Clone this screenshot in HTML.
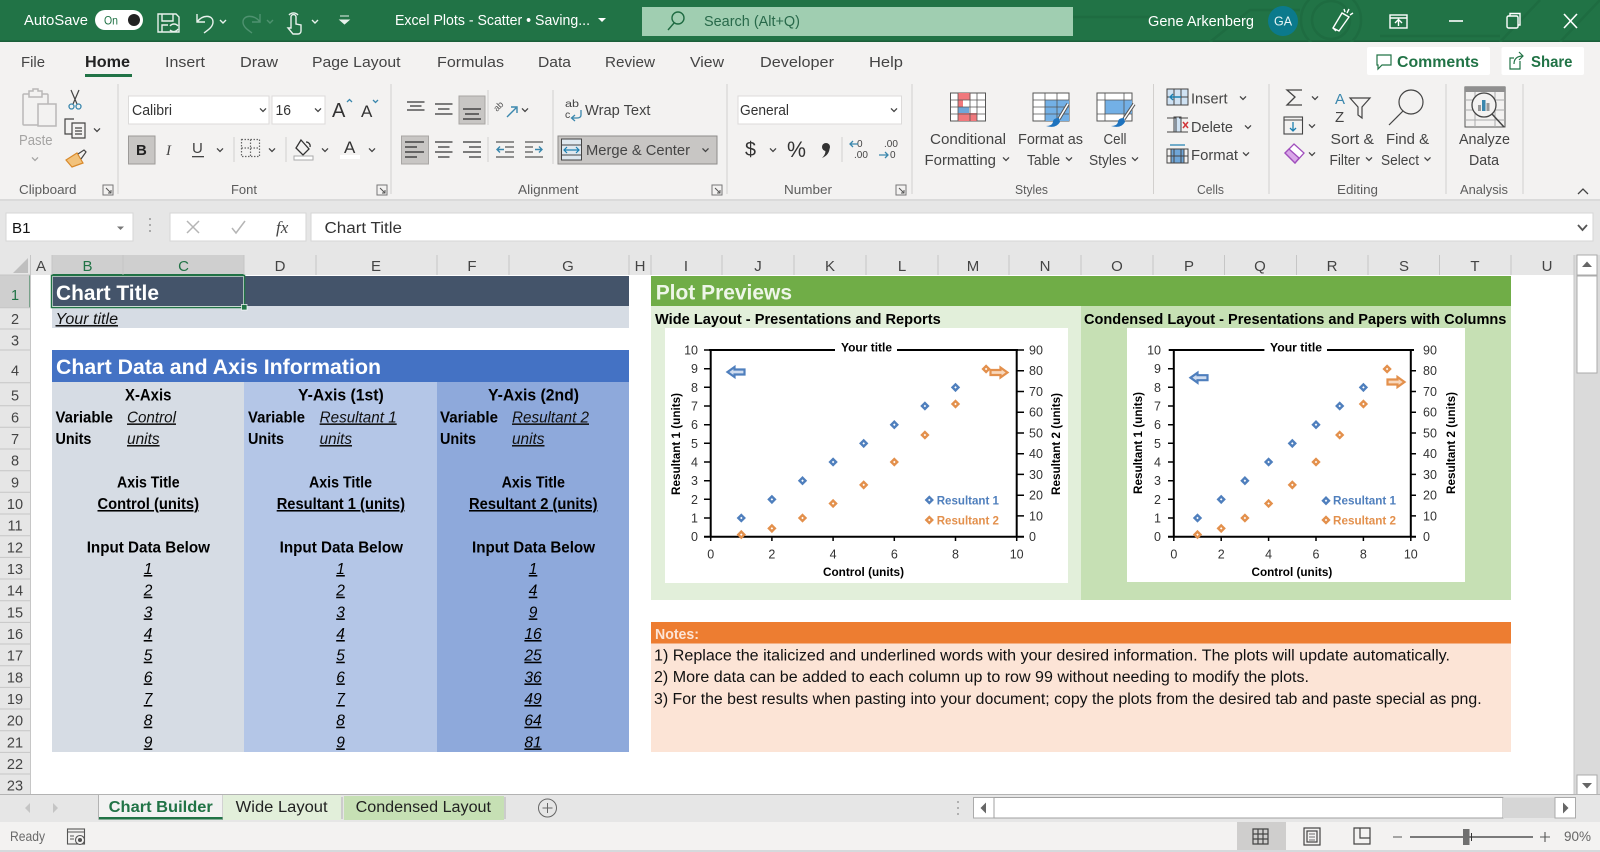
<!DOCTYPE html>
<html lang="en"><head><meta charset="utf-8"><title>Excel Plots - Scatter</title>
<style>
html,body{margin:0;padding:0;width:1600px;height:852px;overflow:hidden;background:#fff}
svg{display:block}
text{white-space:pre}
.u{text-decoration:underline}
.b{font-weight:bold}
.i{font-style:italic}
.r{fill:#444;font-size:15px}
.g{fill:#5c5c5c;font-size:13px}
.h{fill:#444;font-size:15px;text-anchor:middle}
.n{fill:#444;font-size:14.5px;text-anchor:middle}
.d{fill:#000;font-size:15.5px;font-style:italic;text-decoration:underline;text-anchor:middle}
.c{fill:#111;font-size:15.5px}
.ax{fill:#333;font-size:12.5px}
.axe{fill:#333;font-size:12.5px;text-anchor:end}
.axm{fill:#333;font-size:12.5px;text-anchor:middle}
.ctb{fill:#000;font-size:11.5px;font-weight:bold}
</style></head><body>
<svg xmlns="http://www.w3.org/2000/svg" width="1600" height="852" viewBox="0 0 1600 852" font-family="'Liberation Sans',sans-serif">
<defs>
<path id="cv" d="M-3-1.6L0 1.4L3-1.6" fill="none" stroke="#444" stroke-width="1.3"/>
<g id="ln"><rect x="-5" y="-5" width="10" height="10" fill="none" stroke="#777"/><path d="M-2-2L3 3M3 0V3H0" fill="none" stroke="#555"/></g>
<rect id="db" x="-2.100" y="-2.100" width="4.200" height="4.200" transform="rotate(45)" fill="#fff" stroke="#4f7fbd" stroke-width="2.400"/>
<rect id="do" x="-2.100" y="-2.100" width="4.200" height="4.200" transform="rotate(45)" fill="#fff" stroke="#e3904c" stroke-width="2.400"/>
<path id="la" d="M0 0L7-5V-2.500H17V2.500H7V5Z" fill="#cfdcef" stroke="#4f7fbd" stroke-width="2.200"/>
<path id="ra" d="M0 0L-7-5V-2.500H-17V2.500H-7V5Z" fill="#f8d8bd" stroke="#e3904c" stroke-width="2.200"/>
</defs>

<!-- sheet base -->
<rect width="1600" height="852" fill="#fff"/>

<!-- title bar -->
<rect width="1600" height="42" fill="#217346"/>
<rect y="40.500" width="1600" height="1.500" fill="#1b5e3a"/>
<g fill="none" stroke="#1e6c41" stroke-width="2.500">
<circle cx="1331" cy="20" r="30"/><circle cx="1331" cy="20" r="19"/>
<path d="M1073 17H1150M1210 42L1250 10H1300M1500 42L1540 0M1560 42L1600 0M1380 36H1500"/>
</g>
<text x="24" y="25" fill="#fff" font-size="15" textLength="64" lengthAdjust="spacingAndGlyphs">AutoSave</text>
<rect x="95" y="10" width="48" height="20" rx="10" fill="#fff"/>
<text x="104" y="24.500" fill="#217346" font-size="12" textLength="14" lengthAdjust="spacingAndGlyphs">On</text>
<circle cx="134" cy="20" r="6" fill="#222"/>
<g fill="none" stroke="#e8f1ec" stroke-width="1.400">
<path d="M158 14H176L179 17V32H158ZM162 14V21H173V14M162 32V25H168"/>
<path d="M170 26a5 5 0 0 1 8 0M178 29a5 5 0 0 1-8 1"/>
<path d="M197 14V22H205M197 22C203 14 213 15 213 22C213 27 208 30 204 33"/>
<path d="M220 20l3 3 3-3M312 20l3 3 3-3"/>
<path d="M291 28V17a2.400 2.400 0 0 1 5 0V24l5 1V31a3 3 0 0 1-3 3H293L288 28Z"/>
<path d="M289 15a6 6 0 0 1 9 0"/>
</g>
<g fill="none" stroke="#4f9270" stroke-width="1.400"><path d="M260 14V22H252M260 22C254 14 243 15 243 22C243 27 248 30 252 33M267 20l3 3 3-3"/></g>
<path d="M340 16H349M340 20l4.500 4 4.500-4Z" fill="#e8f1ec" stroke="#e8f1ec"/>
<text x="395" y="25" fill="#fff" font-size="15" textLength="195" lengthAdjust="spacingAndGlyphs">Excel Plots - Scatter • Saving...</text>
<path d="M598 18H606L602 22Z" fill="#fff"/>
<rect x="642" y="7" width="431" height="29" fill="#a0ceb1"/>
<g fill="none" stroke="#1f6b42" stroke-width="1.400"><circle cx="678" cy="18" r="6"/><path d="M674 23L668 30"/></g>
<text x="704" y="26" fill="#28694a" font-size="15" textLength="96" lengthAdjust="spacingAndGlyphs">Search (Alt+Q)</text>
<text x="1148" y="26" fill="#fff" font-size="15" textLength="106" lengthAdjust="spacingAndGlyphs">Gene Arkenberg</text>
<circle cx="1283" cy="21" r="15" fill="#0b7a8c"/>
<text x="1283" y="25.500" fill="#e6f4f4" font-size="12.500" text-anchor="middle">GA</text>
<g fill="none" stroke="#fff" stroke-width="1.400">
<path d="M1333 28L1342 13L1349 17L1339 31ZM1344 9L1345 12M1349 9L1347 13M1353 13L1350 15M1333 28L1336 31"/>
<rect x="1390" y="15" width="17" height="13"/><path d="M1390 18H1407M1398.500 26V20M1395 23L1398.500 19.500L1402 23"/>
<path d="M1449 21H1463" stroke-width="1.600"/>
<rect x="1507" y="16" width="11" height="12" rx="1.500"/><path d="M1510 16V13.500H1520V25H1518"/>
<path d="M1564 14L1577 28M1577 14L1564 28" stroke-width="1.600"/>
</g>

<!-- ribbon -->
<rect y="42" width="1600" height="157" fill="#f3f2f1"/>
<rect y="201" width="1600" height="54" fill="#e6e6e6"/>
<rect y="199" width="1600" height="2" fill="#dadada"/>
<text x="21" y="67" class="r" textLength="24" lengthAdjust="spacingAndGlyphs">File</text>
<text x="85" y="67" fill="#222" font-size="15.500" font-weight="bold" textLength="45" lengthAdjust="spacingAndGlyphs">Home</text>
<rect x="85" y="74" width="47" height="3" fill="#217346"/>
<text x="165" y="67" class="r" textLength="40" lengthAdjust="spacingAndGlyphs">Insert</text>
<text x="240" y="67" class="r" textLength="38" lengthAdjust="spacingAndGlyphs">Draw</text>
<text x="312" y="67" class="r" textLength="88.500" lengthAdjust="spacingAndGlyphs">Page Layout</text>
<text x="437" y="67" class="r" textLength="67" lengthAdjust="spacingAndGlyphs">Formulas</text>
<text x="538" y="67" class="r" textLength="33" lengthAdjust="spacingAndGlyphs">Data</text>
<text x="605" y="67" class="r" textLength="50" lengthAdjust="spacingAndGlyphs">Review</text>
<text x="690" y="67" class="r" textLength="34" lengthAdjust="spacingAndGlyphs">View</text>
<text x="760" y="67" class="r" textLength="74" lengthAdjust="spacingAndGlyphs">Developer</text>
<text x="869" y="67" class="r" textLength="34" lengthAdjust="spacingAndGlyphs">Help</text>
<rect x="1367" y="47" width="123" height="28" rx="2" fill="#fff"/>
<path d="M1377 55H1391V65H1382L1378 69V65H1377Z" fill="none" stroke="#217346" stroke-width="1.200"/>
<text x="1397" y="67" fill="#217346" font-size="15.500" font-weight="bold" textLength="82" lengthAdjust="spacingAndGlyphs">Comments</text>
<rect x="1501.500" y="47" width="82.500" height="28" rx="2" fill="#fff"/>
<path d="M1520 61V69H1510V58H1514M1514 64C1514 59 1517 56 1523 56M1519 52L1523 56L1519 60" fill="none" stroke="#217346" stroke-width="1.200"/>
<text x="1531" y="67" fill="#217346" font-size="15.500" font-weight="bold" textLength="41.500" lengthAdjust="spacingAndGlyphs">Share</text>

<!-- separators -->
<g stroke="#d2d0ce" stroke-width="1">
<path d="M118 84V194M391 84V194M727 84V194M912 84V194M1153.500 84V194M1269 84V194M1446 84V194M1523 84V194"/>
<path d="M234 137V162M286 137V162M488 90V125M488 137V162M553 90V164M842 137V162"/>
</g>
<!-- group labels -->
<text x="19" y="194" class="g" textLength="57.500" lengthAdjust="spacingAndGlyphs">Clipboard</text>
<text x="231" y="194" class="g" textLength="26" lengthAdjust="spacingAndGlyphs">Font</text>
<text x="518" y="194" class="g" textLength="60.500" lengthAdjust="spacingAndGlyphs">Alignment</text>
<text x="784" y="194" class="g" textLength="48" lengthAdjust="spacingAndGlyphs">Number</text>
<text x="1015" y="194" class="g" textLength="33" lengthAdjust="spacingAndGlyphs">Styles</text>
<text x="1197" y="194" class="g" textLength="27" lengthAdjust="spacingAndGlyphs">Cells</text>
<text x="1337" y="194" class="g" textLength="41" lengthAdjust="spacingAndGlyphs">Editing</text>
<text x="1460" y="194" class="g" textLength="48" lengthAdjust="spacingAndGlyphs">Analysis</text>
<use href="#ln" x="108" y="190"/><use href="#ln" x="382" y="190"/><use href="#ln" x="717" y="190"/><use href="#ln" x="901" y="190"/>
<path d="M1578 194L1583 189L1588 194" fill="none" stroke="#444" stroke-width="1.300"/>

<!-- clipboard -->
<g fill="#f3f2f1" stroke="#b9b8b7" stroke-width="1.500">
<rect x="23" y="94" width="25" height="31" rx="1"/><path d="M29 94V91H33V89H38V91H42V94V97H29Z"/>
<rect x="38" y="104" width="18" height="22" fill="#f3f2f1"/>
</g>
<text x="19" y="145" fill="#a5a4a3" font-size="14.500" textLength="33.500" lengthAdjust="spacingAndGlyphs">Paste</text>
<use href="#cv" x="35" y="159" opacity=".45"/>
<g fill="none" stroke="#444" stroke-width="1.200"><path d="M71 90L77 104M79 90L73 104"/></g>
<g fill="none" stroke="#3a87ad" stroke-width="1.300"><circle cx="71.500" cy="106.500" r="2.500"/><circle cx="78.500" cy="106.500" r="2.500"/></g>
<path d="M72 134H65V119H74M77 123H85V138H72V123H77M75 128H82M75 131H82M75 134H82" fill="none" stroke="#444" stroke-width="1.200"/>
<use href="#cv" x="97" y="130"/>
<path d="M66 160L77 153L83 163L72 167Z" fill="#f2c27b" stroke="#d98a2b" stroke-width="1.200"/><path d="M78 154L84 150L86 152L81 159" fill="none" stroke="#444" stroke-width="1.200"/>

<!-- font -->
<rect x="128.500" y="96" width="140.500" height="28" fill="#fff" stroke="#dcdbda"/>
<text x="132" y="115" fill="#333" font-size="15" textLength="40" lengthAdjust="spacingAndGlyphs">Calibri</text>
<use href="#cv" x="263" y="110"/>
<rect x="272" y="96" width="53" height="28" fill="#fff" stroke="#dcdbda"/>
<text x="275.500" y="115" fill="#333" font-size="15" textLength="15.500" lengthAdjust="spacingAndGlyphs">16</text>
<use href="#cv" x="318" y="110"/>
<text x="332" y="117" fill="#333" font-size="20">A</text>
<path d="M347 102L349.500 99.500L352 102" fill="none" stroke="#3a87ad" stroke-width="1.300"/>
<text x="361" y="117" fill="#333" font-size="17">A</text>
<path d="M373 100L375.500 102.500L378 100" fill="none" stroke="#3a87ad" stroke-width="1.300"/>
<rect x="128.500" y="136" width="26.500" height="28" fill="#c8c6c4" stroke="#9c9a98"/>
<text x="136" y="155" fill="#222" font-size="15" font-weight="bold">B</text>
<text x="166" y="155" fill="#444" font-size="15" font-style="italic" font-family="'Liberation Serif',serif">I</text>
<text x="192" y="153" fill="#444" font-size="15">U</text><rect x="192" y="156" width="12" height="1.300" fill="#444"/>
<use href="#cv" x="220" y="150"/>
<g fill="none" stroke="#666" stroke-width="1.200" stroke-dasharray="1.500 1.500"><rect x="241.500" y="139.500" width="18" height="17"/><path d="M250.500 139.500V156.500M241.500 148H259.500"/></g>
<use href="#cv" x="272" y="150"/>
<path d="M301 140L309 149L303 155L296 148ZM306 142a4 4 0 0 1 4 5" fill="none" stroke="#333" stroke-width="1.300"/>
<rect x="294" y="156" width="19" height="4" fill="#fff" stroke="#aaa"/>
<use href="#cv" x="325" y="150"/>
<text x="344" y="153" fill="#333" font-size="17">A</text><rect x="340" y="155" width="20" height="4" fill="#fff"/>
<use href="#cv" x="372" y="150"/>

<!-- alignment -->
<g stroke="#555" stroke-width="1.400">
<path d="M407 102H424.500M410 106H421.500M407 110H424.500"/>
<path d="M435 104H452.500M438 109H449.500M435 114H452.500"/>
</g>
<rect x="459" y="96" width="26" height="28" fill="#c8c6c4" stroke="#a8a6a4"/>
<g stroke="#444" stroke-width="1.400"><path d="M463 109H481M465 114H479M463 119H481"/></g>
<text x="497" y="112" fill="#555" font-size="9" transform="rotate(-45 497 112)">ab</text>
<path d="M507 117L516 108M511 107H517V113" fill="none" stroke="#3a87ad" stroke-width="1.400"/>
<use href="#cv" x="525" y="110"/>
<text x="565" y="107" fill="#444" font-size="10.500" textLength="14" lengthAdjust="spacingAndGlyphs">ab</text>
<text x="565" y="118" fill="#444" font-size="10.500">c</text>
<path d="M581 110V115Q581 118 577 118H572M575 115L571.500 118L575 121" fill="none" stroke="#3a87ad" stroke-width="1.300"/>
<text x="585" y="115" class="r" textLength="65.500" lengthAdjust="spacingAndGlyphs">Wrap Text</text>
<rect x="401.500" y="136" width="27" height="28" fill="#c8c6c4" stroke="#a8a6a4"/>
<g stroke="#444" stroke-width="1.400"><path d="M405 142H424M405 147H417M405 152H424M405 157H417"/></g>
<g stroke="#555" stroke-width="1.400"><path d="M435 142H452.500M438 147H449.500M435 152H452.500M438 157H449.500M463 142H481M469 147H481M463 152H481M469 157H481"/></g>
<g stroke="#555" stroke-width="1.300" fill="none"><path d="M505 147H514M505 152H514M496 157H514M496 142H514" /></g>
<path d="M504 149.500H497M500 146.500L497 149.500L500 152.500" fill="none" stroke="#3a87ad" stroke-width="1.400"/>
<g stroke="#555" stroke-width="1.300" fill="none"><path d="M525 142H543M525 147H533M525 152H533M525 157H543"/></g>
<path d="M535 149.500H542M539 146.500L542 149.500L539 152.500" fill="none" stroke="#3a87ad" stroke-width="1.400"/>
<rect x="558" y="136" width="159" height="28" fill="#c8c6c4" stroke="#8e8c8a"/>
<rect x="561.500" y="139" width="20" height="21" fill="#dfe8ef" stroke="#444"/>
<path d="M561.500 145H581.500M561.500 155H581.500" stroke="#444" fill="none"/>
<path d="M564 150H579M567 147L564 150L567 153M576 147L579 150L576 153" fill="none" stroke="#1b7fb0" stroke-width="1.200"/>
<text x="586" y="155" fill="#444" font-size="15" textLength="104" lengthAdjust="spacingAndGlyphs">Merge &amp; Center</text>
<use href="#cv" x="705.500" y="150"/>

<!-- number -->
<rect x="738" y="96" width="163.500" height="28" fill="#fff" stroke="#dcdbda"/>
<text x="740" y="115" fill="#333" font-size="15" textLength="49" lengthAdjust="spacingAndGlyphs">General</text>
<use href="#cv" x="894" y="110"/>
<text x="745" y="156" fill="#333" font-size="20" textLength="11" lengthAdjust="spacingAndGlyphs">$</text>
<use href="#cv" x="773" y="150"/>
<text x="787" y="157" fill="#333" font-size="22" textLength="19" lengthAdjust="spacingAndGlyphs">%</text>
<circle cx="826" cy="147" r="4" fill="#333"/><path d="M829.500 147C830 152 827 156 822 158C825 155 826 152 825 150Z" fill="#333"/>
<text x="857" y="147" fill="#444" font-size="10">0</text>
<text x="854" y="158" fill="#444" font-size="10">.00</text>
<path d="M858 144H850M853 141L850 144L853 147" fill="none" stroke="#3a87ad" stroke-width="1.300"/>
<text x="884" y="147" fill="#444" font-size="10">.00</text>
<text x="890" y="158" fill="#444" font-size="10">0</text>
<path d="M879 155H888M885 152L888 155L885 158" fill="none" stroke="#3a87ad" stroke-width="1.300"/>

<!-- styles -->
<g>
<rect x="950.500" y="93" width="35" height="28" fill="#fff" stroke="#555"/>
<rect x="958" y="93" width="12.500" height="7" fill="#f0787c"/><rect x="958" y="100" width="5" height="7" fill="#f0787c"/>
<rect x="958" y="107" width="11" height="6" fill="#6fa6d8"/>
<rect x="958" y="113" width="19" height="8" fill="#f0787c"/>
<path d="M958 93V121M970 93V121M977 93V121M950.500 100H985.500M950.500 107H985.500M950.500 114H985.500" stroke="#555" fill="none" stroke-width=".8"/>
</g>
<g>
<rect x="1033" y="93" width="36" height="28" fill="#fff" stroke="#555"/>
<rect x="1045" y="100" width="24" height="21" fill="#73b0e6"/>
<path d="M1045 93V121M1057 93V121M1033 100H1069M1033 107H1069M1033 114H1069" stroke="#555" fill="none" stroke-width=".8"/>
<path d="M1068 104L1059 119" stroke="#555" stroke-width="3.500"/><path d="M1068 104L1059 119" stroke="#fff" stroke-width="1.500"/>
<path d="M1059 118Q1053 118 1053 122Q1052 126 1046 126Q1056 129 1060 122Z" fill="#1e73be"/>
</g>
<g>
<rect x="1097" y="93" width="35" height="28" fill="#fff" stroke="#555"/>
<rect x="1105" y="100" width="27" height="14" fill="#73b0e6"/>
<path d="M1105 93V121M1124 93V121M1097 100H1132M1097 114H1132" stroke="#555" fill="none" stroke-width=".8"/>
<path d="M1134 104L1124 119" stroke="#555" stroke-width="3.500"/><path d="M1134 104L1124 119" stroke="#fff" stroke-width="1.500"/>
<path d="M1124 118Q1118 118 1118 122Q1117 126 1111 126Q1121 129 1125 122Z" fill="#1e73be"/>
</g>
<g class="st" fill="#444" font-size="15">
<text x="930" y="144" textLength="76" lengthAdjust="spacingAndGlyphs">Conditional</text>
<text x="924.500" y="165" textLength="71.500" lengthAdjust="spacingAndGlyphs">Formatting</text>
<text x="1018" y="144" textLength="65" lengthAdjust="spacingAndGlyphs">Format as</text>
<text x="1027" y="165" textLength="33" lengthAdjust="spacingAndGlyphs">Table</text>
<text x="1103.500" y="144" textLength="23" lengthAdjust="spacingAndGlyphs">Cell</text>
<text x="1089" y="165" textLength="37.500" lengthAdjust="spacingAndGlyphs">Styles</text>
<text x="1191" y="103.500" textLength="36.500" lengthAdjust="spacingAndGlyphs">Insert</text>
<text x="1191" y="132" textLength="42" lengthAdjust="spacingAndGlyphs">Delete</text>
<text x="1191" y="160" textLength="47" lengthAdjust="spacingAndGlyphs">Format</text>
<text x="1330.500" y="144" textLength="43.500" lengthAdjust="spacingAndGlyphs">Sort &amp;</text>
<text x="1329.500" y="165" textLength="30.500" lengthAdjust="spacingAndGlyphs">Filter</text>
<text x="1386" y="144" textLength="43" lengthAdjust="spacingAndGlyphs">Find &amp;</text>
<text x="1381" y="165" textLength="38" lengthAdjust="spacingAndGlyphs">Select</text>
<text x="1459" y="144" textLength="51" lengthAdjust="spacingAndGlyphs">Analyze</text>
<text x="1469" y="165" textLength="30" lengthAdjust="spacingAndGlyphs">Data</text>
</g>
<use href="#cv" x="1006" y="159"/><use href="#cv" x="1069" y="159"/><use href="#cv" x="1135" y="159"/>
<use href="#cv" x="1243" y="98"/><use href="#cv" x="1248" y="127"/><use href="#cv" x="1246" y="154"/>
<use href="#cv" x="1369" y="159"/><use href="#cv" x="1427.500" y="159"/>

<!-- cells -->
<g fill="none" stroke="#444" stroke-width="1">
<rect x="1167" y="89" width="21" height="16" fill="#cfe2f3"/><path d="M1174 89V105M1181 89V105M1167 97H1188"/>
<rect x="1174" y="117" width="7" height="15" fill="#cfe2f3"/><path d="M1167 118H1176V132H1167M1188 118H1179M1188 132H1179"/>
<rect x="1167" y="149" width="21" height="14"/><rect x="1171" y="149" width="13" height="14" fill="#6fa6d8"/><path d="M1174 149V163M1181 149V163M1167 156H1188"/>
</g>
<path d="M1181 97H1170M1173 94L1170 97L1173 100" fill="none" stroke="#1b7fb0" stroke-width="1.400"/>
<path d="M1183 122L1188 128M1188 122L1183 128" stroke="#d13438" stroke-width="1.500"/>
<path d="M1170 145H1185" stroke="#1b7fb0" stroke-width="1.200"/>

<!-- editing -->
<path d="M1302 90H1287L1295 97L1287 105H1302" fill="none" stroke="#444" stroke-width="1.300"/>
<use href="#cv" x="1315" y="98"/>
<rect x="1284" y="117" width="18.500" height="17" fill="none" stroke="#444" stroke-width="1.100"/><path d="M1284 120H1302.500" stroke="#444"/>
<path d="M1293 122V131M1290 128L1293 131L1296 128" fill="none" stroke="#1b7fb0" stroke-width="1.300"/>
<use href="#cv" x="1312" y="126"/>
<path d="M1294 144L1304 153L1295 163L1285 153Z" fill="#fff" stroke="#a04fbd" stroke-width="1.300"/><path d="M1289 149L1299 158L1295 163L1285 153Z" fill="#d9a8e8" stroke="#a04fbd" stroke-width="1.300"/>
<use href="#cv" x="1312" y="154"/>
<text x="1335" y="104" fill="#3a87ad" font-size="15">A</text>
<text x="1335" y="122" fill="#444" font-size="15">Z</text>
<path d="M1350 98H1370L1362 107V118L1358 115V107Z" fill="none" stroke="#444" stroke-width="1.200"/>
<circle cx="1411" cy="102" r="12" fill="none" stroke="#444" stroke-width="1.200"/><path d="M1403 111L1389 125" stroke="#444" stroke-width="1.200"/>

<!-- analyze -->
<rect x="1465" y="87" width="40" height="40" fill="#f3f2f1" stroke="#555"/>
<rect x="1465" y="87" width="40" height="5" fill="#8f8f8f"/>
<path d="M1465 100H1505M1465 110H1505M1465 120H1505M1475 92V127M1495 92V127" stroke="#aaa" fill="none"/>
<circle cx="1484" cy="105" r="12" fill="#f3f2f1" stroke="#444" stroke-width="1.300"/>
<rect x="1478" y="105" width="3" height="6" fill="#999"/><rect x="1482" y="100" width="3.500" height="11" fill="#3a87ad"/><rect x="1486.500" y="103" width="3" height="8" fill="#999"/>
<path d="M1492 114L1504 127" stroke="#444" stroke-width="1.500"/>

<!-- formula bar -->
<rect x="6" y="213" width="127" height="28" fill="#fff" stroke="#d6d6d6"/>
<text x="12" y="233" fill="#111" font-size="15" textLength="18.500" lengthAdjust="spacingAndGlyphs">B1</text>
<path d="M117 226.500H124L120.500 230Z" fill="#777"/>
<path d="M150 218v2M150 224v2M150 230v2" stroke="#aaa" stroke-width="2"/>
<rect x="170" y="213" width="136" height="28" fill="#fff" stroke="#d6d6d6"/>
<path d="M187 221L199 233M199 221L187 233" stroke="#b5b5b5" stroke-width="1.500"/>
<path d="M232 228L236 233L245 221" fill="none" stroke="#b5b5b5" stroke-width="1.500"/>
<text x="276" y="233" fill="#444" font-size="17" font-style="italic" font-family="'Liberation Serif',serif">fx</text>
<rect x="311" y="213" width="1282" height="28" fill="#fff" stroke="#d6d6d6"/>
<text x="324.500" y="233" fill="#333" font-size="15.500" textLength="77.500" lengthAdjust="spacingAndGlyphs">Chart Title</text>
<path d="M1578 225L1582.500 230L1587 225" fill="none" stroke="#555" stroke-width="1.800"/>

<!-- column headers -->
<rect y="255" width="1574" height="20" fill="#e6e6e6"/>
<rect x="52" y="255" width="192" height="20" fill="#cfcfcf"/>
<rect x="52" y="274" width="192" height="1.500" fill="#217346"/>
<path d="M28 258V273H13Z" fill="#bfbfbf"/>
<g stroke="#c6c6c6" stroke-width="1">
<path d="M30.500 255V275M52 255V275M123 255V275M244 255V275M316 255V275M437 255V275M509 255V275M629 255V275M651 255V275M722 255V275M794 255V275M866 255V275M938 255V275M1009 255V275M1081 255V275M1153 255V275M1224.500 255V275M1296.500 255V275M1368 255V275M1439.500 255V275M1511 255V275M1574 255V800"/>
</g>
<text x="41" y="271" class="h">A</text><text x="87.500" y="271" class="h" style="fill:#217346">B</text><text x="183.500" y="271" class="h" style="fill:#217346">C</text>
<text x="280" y="271" class="h">D</text><text x="376" y="271" class="h">E</text><text x="472" y="271" class="h">F</text><text x="568" y="271" class="h">G</text><text x="640" y="271" class="h">H</text>
<text x="686" y="271" class="h">I</text><text x="758" y="271" class="h">J</text><text x="830" y="271" class="h">K</text><text x="902" y="271" class="h">L</text><text x="973" y="271" class="h">M</text><text x="1045" y="271" class="h">N</text><text x="1117" y="271" class="h">O</text><text x="1189" y="271" class="h">P</text><text x="1260" y="271" class="h">Q</text><text x="1332" y="271" class="h">R</text><text x="1404" y="271" class="h">S</text><text x="1475" y="271" class="h">T</text><text x="1547" y="271" class="h">U</text>

<!-- row headers -->
<rect x="0" y="275" width="30.500" height="520" fill="#e6e6e6"/>
<rect x="0" y="275" width="30.500" height="33" fill="#cfcfcf"/>
<rect x="29.500" y="275" width="1.500" height="33" fill="#217346"/>
<path d="M0 275H30.500M0 307.700H30.500M0 329H30.500M0 350H30.500M0 382.700H30.500M0 405.700H30.500M0 427.300H30.500M0 449H30.500M0 470.700H30.500M0 492.300H30.500M0 514H30.500M0 535.700H30.500M0 557.400H30.500M0 579H30.500M0 600.700H30.500M0 622.400H30.500M0 644H30.500M0 665.700H30.500M0 687.400H30.500M0 709H30.500M0 730.700H30.500M0 752.400H30.500M0 774H30.500" stroke="#c6c6c6"/>
<path d="M30.500 275V795" stroke="#c6c6c6"/>
<text x="15" y="300" class="n" style="fill:#217346">1</text><text x="15" y="324" class="n">2</text><text x="15" y="345.700" class="n">3</text><text x="15" y="375.500" class="n">4</text><text x="15" y="400.700" class="n">5</text><text x="15" y="422.400" class="n">6</text><text x="15" y="444" class="n">7</text><text x="15" y="465.700" class="n">8</text><text x="15" y="487.400" class="n">9</text><text x="15" y="509" class="n">10</text><text x="15" y="530.700" class="n">11</text><text x="15" y="552.400" class="n">12</text><text x="15" y="574" class="n">13</text><text x="15" y="595.700" class="n">14</text><text x="15" y="617.400" class="n">15</text><text x="15" y="639" class="n">16</text><text x="15" y="660.700" class="n">17</text><text x="15" y="682.400" class="n">18</text><text x="15" y="704" class="n">19</text><text x="15" y="725.700" class="n">20</text><text x="15" y="747.400" class="n">21</text><text x="15" y="769" class="n">22</text><text x="15" y="790.700" class="n">23</text>

<!-- left data -->
<rect x="52" y="276" width="577" height="30" fill="#44546a"/>
<rect x="52" y="306" width="577" height="22" fill="#d6dce4"/>
<rect x="52" y="350" width="577" height="32" fill="#4472c4"/>
<rect x="52" y="382" width="192" height="370" fill="#d6dce4"/>
<rect x="244" y="382" width="193" height="370" fill="#b4c6e7"/>
<rect x="437" y="382" width="192" height="370" fill="#8ea9db"/>
<rect x="51.500" y="275.500" width="193" height="32" fill="none" stroke="#217346" stroke-width="1.500"/>
<rect x="52.500" y="276.500" width="191" height="30" fill="none" stroke="#d8e6dc" stroke-width=".7"/>
<rect x="241.500" y="304.500" width="5.500" height="5.500" fill="#217346" stroke="#fff" stroke-width=".7"/>
<text x="56" y="300" fill="#fff" font-size="21" font-weight="bold" textLength="103" lengthAdjust="spacingAndGlyphs">Chart Title</text>
<text x="55.500" y="324" class="c i u" textLength="62.500" lengthAdjust="spacingAndGlyphs">Your title</text>
<text x="56" y="374" fill="#fff" font-size="21" font-weight="bold" textLength="325" lengthAdjust="spacingAndGlyphs">Chart Data and Axis Information</text>

<g fill="#000" font-size="16.500" font-weight="bold">
<text x="125" y="400.700" textLength="46.400" lengthAdjust="spacingAndGlyphs">X-Axis</text>
<text x="298" y="400.700" textLength="85.700" lengthAdjust="spacingAndGlyphs">Y-Axis (1st)</text>
<text x="488" y="400.700" textLength="91" lengthAdjust="spacingAndGlyphs">Y-Axis (2nd)</text>
</g>
<g fill="#000" font-size="15.500" font-weight="bold">
<text x="55.500" y="422.400" textLength="57.500" lengthAdjust="spacingAndGlyphs">Variable</text>
<text x="248" y="422.400" textLength="57" lengthAdjust="spacingAndGlyphs">Variable</text>
<text x="440" y="422.400" textLength="58" lengthAdjust="spacingAndGlyphs">Variable</text>
<text x="55.500" y="444" textLength="35.900" lengthAdjust="spacingAndGlyphs">Units</text>
<text x="248" y="444" textLength="36" lengthAdjust="spacingAndGlyphs">Units</text>
<text x="440" y="444" textLength="36" lengthAdjust="spacingAndGlyphs">Units</text>
<text x="117" y="487.400" textLength="62.600" lengthAdjust="spacingAndGlyphs">Axis Title</text>
<text x="309" y="487.400" textLength="63" lengthAdjust="spacingAndGlyphs">Axis Title</text>
<text x="501.600" y="487.400" textLength="63.400" lengthAdjust="spacingAndGlyphs">Axis Title</text>
<text x="97.500" y="509" class="u" textLength="101.500" lengthAdjust="spacingAndGlyphs">Control (units)</text>
<text x="276.700" y="509" class="u" textLength="128.300" lengthAdjust="spacingAndGlyphs">Resultant 1 (units)</text>
<text x="469" y="509" class="u" textLength="128.500" lengthAdjust="spacingAndGlyphs">Resultant 2 (units)</text>
<text x="86.700" y="552.400" textLength="123.300" lengthAdjust="spacingAndGlyphs">Input Data Below</text>
<text x="279.600" y="552.400" textLength="123.400" lengthAdjust="spacingAndGlyphs">Input Data Below</text>
<text x="472" y="552.400" textLength="123" lengthAdjust="spacingAndGlyphs">Input Data Below</text>
</g>
<text x="127" y="422.400" class="c i u" textLength="49" lengthAdjust="spacingAndGlyphs">Control</text>
<text x="319.600" y="422.400" class="c i u" textLength="77.100" lengthAdjust="spacingAndGlyphs">Resultant 1</text>
<text x="512" y="422.400" class="c i u" textLength="77" lengthAdjust="spacingAndGlyphs">Resultant 2</text>
<text x="127" y="444" class="c i u" textLength="32.600" lengthAdjust="spacingAndGlyphs">units</text>
<text x="319.600" y="444" class="c i u" textLength="32.400" lengthAdjust="spacingAndGlyphs">units</text>
<text x="512" y="444" class="c i u" textLength="32.500" lengthAdjust="spacingAndGlyphs">units</text>

<text x="148" y="574" class="d">1</text><text x="148" y="595.700" class="d">2</text><text x="148" y="617.400" class="d">3</text><text x="148" y="639" class="d">4</text><text x="148" y="660.700" class="d">5</text><text x="148" y="682.400" class="d">6</text><text x="148" y="704" class="d">7</text><text x="148" y="725.700" class="d">8</text><text x="148" y="747.400" class="d">9</text>
<text x="340.500" y="574" class="d">1</text><text x="340.500" y="595.700" class="d">2</text><text x="340.500" y="617.400" class="d">3</text><text x="340.500" y="639" class="d">4</text><text x="340.500" y="660.700" class="d">5</text><text x="340.500" y="682.400" class="d">6</text><text x="340.500" y="704" class="d">7</text><text x="340.500" y="725.700" class="d">8</text><text x="340.500" y="747.400" class="d">9</text>
<text x="533" y="574" class="d">1</text><text x="533" y="595.700" class="d">4</text><text x="533" y="617.400" class="d">9</text><text x="533" y="639" class="d">16</text><text x="533" y="660.700" class="d">25</text><text x="533" y="682.400" class="d">36</text><text x="533" y="704" class="d">49</text><text x="533" y="725.700" class="d">64</text><text x="533" y="747.400" class="d">81</text>

<!-- right panels -->
<rect x="651" y="276" width="860" height="30" fill="#70ad47"/>
<rect x="651" y="306" width="430" height="294" fill="#e2efda"/>
<rect x="1081" y="306" width="430" height="294" fill="#c6e0b4"/>
<text x="655.700" y="299.300" fill="#eef6e8" font-size="21" font-weight="bold" textLength="136.300" lengthAdjust="spacingAndGlyphs">Plot Previews</text>
<text x="655" y="324" fill="#000" font-size="15" font-weight="bold" textLength="285.700" lengthAdjust="spacingAndGlyphs">Wide Layout - Presentations and Reports</text>
<text x="1084" y="324" fill="#000" font-size="15" font-weight="bold" textLength="422.400" lengthAdjust="spacingAndGlyphs">Condensed Layout - Presentations and Papers with Columns</text>

<!-- chart 1 -->
<rect x="665" y="328" width="403" height="255" fill="#fff"/>
<g stroke="#000" fill="none">
<path d="M709 350H835M897 350H1018M710.700 350V537M1016.700 350V537M704 536.700H1024" stroke-width="2"/>
<path d="M704 350H710M704 368.700H710M704 387.300H710M704 406H710M704 424.700H710M704 443.300H710M704 462H710M704 480.700H710M704 499.300H710M704 518H710M1017 370.700H1024M1017 391.500H1024M1017 412.200H1024M1017 433H1024M1017 453.700H1024M1017 474.400H1024M1017 495.200H1024M1017 515.900H1024M1017 350H1024M710.700 536V541M771.900 536V541M833.100 536V541M894.300 536V541M955.500 536V541M1016.700 536V541" stroke-width="1.500"/>
</g>
<text x="841" y="351.500" class="ctb" textLength="51" lengthAdjust="spacingAndGlyphs">Your title</text>
<text x="698" y="354.500" class="axe">10</text><text x="698" y="373.200" class="axe">9</text><text x="698" y="391.800" class="axe">8</text><text x="698" y="410.500" class="axe">7</text><text x="698" y="429.200" class="axe">6</text><text x="698" y="447.800" class="axe">5</text><text x="698" y="466.500" class="axe">4</text><text x="698" y="485.200" class="axe">3</text><text x="698" y="503.800" class="axe">2</text><text x="698" y="522.500" class="axe">1</text><text x="698" y="541.200" class="axe">0</text>
<text x="1029" y="354.500" class="ax">90</text><text x="1029" y="375.200" class="ax">80</text><text x="1029" y="396" class="ax">70</text><text x="1029" y="416.700" class="ax">60</text><text x="1029" y="437.500" class="ax">50</text><text x="1029" y="458.200" class="ax">40</text><text x="1029" y="478.900" class="ax">30</text><text x="1029" y="499.700" class="ax">20</text><text x="1029" y="520.400" class="ax">10</text><text x="1029" y="541.200" class="ax">0</text>
<text x="710.700" y="558.300" class="axm">0</text><text x="771.900" y="558.300" class="axm">2</text><text x="833.100" y="558.300" class="axm">4</text><text x="894.300" y="558.300" class="axm">6</text><text x="955.500" y="558.300" class="axm">8</text><text x="1016.700" y="558.300" class="axm">10</text>
<text x="823" y="576" class="ctb" textLength="81" lengthAdjust="spacingAndGlyphs">Control (units)</text>
<text transform="translate(680 495) rotate(-90)" class="ctb" textLength="102" lengthAdjust="spacingAndGlyphs">Resultant 1 (units)</text>
<text transform="translate(1060 495) rotate(-90)" class="ctb" textLength="102" lengthAdjust="spacingAndGlyphs">Resultant 2 (units)</text>
<use href="#db" x="741.300" y="518"/><use href="#db" x="771.900" y="499.400"/><use href="#db" x="802.500" y="480.700"/><use href="#db" x="833.100" y="462"/><use href="#db" x="863.700" y="443.400"/><use href="#db" x="894.300" y="424.700"/><use href="#db" x="924.900" y="406"/><use href="#db" x="955.500" y="387.400"/>
<use href="#do" x="741.300" y="534.600"/><use href="#do" x="771.900" y="528.400"/><use href="#do" x="802.500" y="518"/><use href="#do" x="833.100" y="503.500"/><use href="#do" x="863.700" y="484.900"/><use href="#do" x="894.300" y="462"/><use href="#do" x="924.900" y="435"/><use href="#do" x="955.500" y="404"/><use href="#do" x="986.100" y="369"/>
<use href="#la" x="727.500" y="372"/><use href="#ra" x="1007.500" y="372.500"/>
<use href="#db" x="929.300" y="500"/><use href="#do" x="929.300" y="520"/>
<text x="936.700" y="504.300" fill="#4f7fbd" font-size="12" font-weight="bold" textLength="62.300" lengthAdjust="spacingAndGlyphs">Resultant 1</text>
<text x="936.700" y="524.300" fill="#e3904c" font-size="12" font-weight="bold" textLength="62.300" lengthAdjust="spacingAndGlyphs">Resultant 2</text>

<!-- chart 2 -->
<rect x="1127" y="328" width="338" height="254" fill="#fff"/>
<g stroke="#000" fill="none">
<path d="M1168.700 350H1264.400M1327 350H1414M1173.800 350V537M1410.800 350V537M1168 536.700H1416" stroke-width="2"/>
<path d="M1168 368.700H1174M1168 387.300H1174M1168 406H1174M1168 424.700H1174M1168 443.300H1174M1168 462H1174M1168 480.700H1174M1168 499.300H1174M1168 518H1174M1411 370.700H1416M1411 391.500H1416M1411 412.200H1416M1411 433H1416M1411 453.700H1416M1411 474.400H1416M1411 495.200H1416M1411 515.900H1416M1173.800 536V541M1221.200 536V541M1268.600 536V541M1316 536V541M1363.400 536V541M1410.800 536V541" stroke-width="1.500"/>
</g>
<text x="1270" y="351.500" class="ctb" textLength="52" lengthAdjust="spacingAndGlyphs">Your title</text>
<text x="1161" y="354.500" class="axe">10</text><text x="1161" y="373.200" class="axe">9</text><text x="1161" y="391.800" class="axe">8</text><text x="1161" y="410.500" class="axe">7</text><text x="1161" y="429.200" class="axe">6</text><text x="1161" y="447.800" class="axe">5</text><text x="1161" y="466.500" class="axe">4</text><text x="1161" y="485.200" class="axe">3</text><text x="1161" y="503.800" class="axe">2</text><text x="1161" y="522.500" class="axe">1</text><text x="1161" y="541.200" class="axe">0</text>
<text x="1423" y="354.500" class="ax">90</text><text x="1423" y="375.200" class="ax">80</text><text x="1423" y="396" class="ax">70</text><text x="1423" y="416.700" class="ax">60</text><text x="1423" y="437.500" class="ax">50</text><text x="1423" y="458.200" class="ax">40</text><text x="1423" y="478.900" class="ax">30</text><text x="1423" y="499.700" class="ax">20</text><text x="1423" y="520.400" class="ax">10</text><text x="1423" y="541.200" class="ax">0</text>
<text x="1173.800" y="558.300" class="axm">0</text><text x="1221.200" y="558.300" class="axm">2</text><text x="1268.600" y="558.300" class="axm">4</text><text x="1316" y="558.300" class="axm">6</text><text x="1363.400" y="558.300" class="axm">8</text><text x="1410.800" y="558.300" class="axm">10</text>
<text x="1251.500" y="576" class="ctb" textLength="80.800" lengthAdjust="spacingAndGlyphs">Control (units)</text>
<text transform="translate(1142 494) rotate(-90)" class="ctb" textLength="102" lengthAdjust="spacingAndGlyphs">Resultant 1 (units)</text>
<text transform="translate(1455 494) rotate(-90)" class="ctb" textLength="102" lengthAdjust="spacingAndGlyphs">Resultant 2 (units)</text>
<use href="#db" x="1197.500" y="518"/><use href="#db" x="1221.200" y="499.400"/><use href="#db" x="1244.900" y="480.700"/><use href="#db" x="1268.600" y="462"/><use href="#db" x="1292.300" y="443.400"/><use href="#db" x="1316" y="424.700"/><use href="#db" x="1339.700" y="406"/><use href="#db" x="1363.400" y="387.400"/>
<use href="#do" x="1197.500" y="534.600"/><use href="#do" x="1221.200" y="528.400"/><use href="#do" x="1244.900" y="518"/><use href="#do" x="1268.600" y="503.500"/><use href="#do" x="1292.300" y="484.900"/><use href="#do" x="1316" y="462"/><use href="#do" x="1339.700" y="435"/><use href="#do" x="1363.400" y="404"/><use href="#do" x="1387.100" y="369"/>
<use href="#la" x="1190.500" y="377.700"/><use href="#ra" x="1404.500" y="382"/>
<use href="#db" x="1326" y="500.700"/><use href="#do" x="1326" y="520"/>
<text x="1333" y="504.300" fill="#4f7fbd" font-size="12" font-weight="bold" textLength="63" lengthAdjust="spacingAndGlyphs">Resultant 1</text>
<text x="1333" y="524.300" fill="#e3904c" font-size="12" font-weight="bold" textLength="63" lengthAdjust="spacingAndGlyphs">Resultant 2</text>

<!-- notes -->
<rect x="651" y="622" width="860" height="21.500" fill="#ed7d31"/>
<rect x="651" y="643.500" width="860" height="108.500" fill="#fce4d6"/>
<text x="655" y="639" fill="#fce4d6" font-size="15" font-weight="bold" textLength="44" lengthAdjust="spacingAndGlyphs">Notes:</text>
<text x="654" y="660.700" fill="#111" font-size="15.500" textLength="796" lengthAdjust="spacingAndGlyphs">1) Replace the italicized and underlined words with your desired information. The plots will update automatically.</text>
<text x="654" y="682.200" fill="#111" font-size="15.500" textLength="655" lengthAdjust="spacingAndGlyphs">2) More data can be added to each column up to row 99 without needing to modify the plots.</text>
<text x="654" y="704" fill="#111" font-size="15.500" textLength="827.600" lengthAdjust="spacingAndGlyphs">3) For the best results when pasting into your document; copy the plots from the desired tab and paste special as png.</text>

<!-- vertical scrollbar -->
<rect x="1574.500" y="255" width="25.500" height="540" fill="#dadada"/>
<rect x="1577" y="255" width="20" height="20" fill="#fff" stroke="#ababab"/>
<path d="M1582 267L1587 261.500L1592 267Z" fill="#666"/>
<rect x="1577" y="276" width="20" height="97" fill="#fff" stroke="#ababab"/>
<rect x="1577" y="775" width="20" height="20" fill="#fff" stroke="#ababab"/>
<path d="M1582 783L1587 788.500L1592 783Z" fill="#666"/>

<!-- tab bar -->
<rect y="794.500" width="1600" height="27.500" fill="#e6e6e6"/>
<path d="M0 794.500H1600" stroke="#b3b3b3"/>
<path d="M30 803L25 808L30 813ZM53 803L58 808L53 813Z" fill="#c5c5c5"/>
<rect x="98.500" y="795" width="124.500" height="24" fill="#f2f2f2"/>
<rect x="98.500" y="817" width="124.500" height="2.500" fill="#217346"/>
<path d="M98.500 795V819M223 795V819" stroke="#b3b3b3"/>
<text x="108.700" y="812" fill="#217346" font-size="15.500" font-weight="bold" textLength="104.100" lengthAdjust="spacingAndGlyphs">Chart Builder</text>
<rect x="223" y="795" width="118" height="25" fill="#e2efda"/>
<text x="235.700" y="812" fill="#222" font-size="15.500" textLength="91.900" lengthAdjust="spacingAndGlyphs">Wide Layout</text>
<path d="M342 797V819M505 797V819" stroke="#b3b3b3"/>
<rect x="344" y="796" width="160" height="24" fill="#c6e0b4"/>
<text x="355.600" y="812" fill="#222" font-size="15.500" textLength="135.400" lengthAdjust="spacingAndGlyphs">Condensed Layout</text>
<circle cx="547.500" cy="808" r="9" fill="none" stroke="#666"/><path d="M542.500 808H552.500M547.500 803V813" stroke="#666"/>
<path d="M958 801v2M958 807v2M958 813v2" stroke="#b0b0b0" stroke-width="2"/>
<rect x="973.500" y="797.500" width="20.500" height="20.500" fill="#fff" stroke="#ababab"/>
<path d="M986 802.500L980.500 808L986 813.500Z" fill="#666"/>
<rect x="994" y="797.500" width="509" height="20.500" fill="#fff" stroke="#a0a0a0"/>
<rect x="1503" y="797.500" width="52" height="20.500" fill="#d6d6d6"/>
<rect x="1555" y="797.500" width="20.500" height="20.500" fill="#fff" stroke="#ababab"/>
<path d="M1563 802.500L1568.500 808L1563 813.500Z" fill="#666"/>

<!-- status bar -->
<rect y="822" width="1600" height="28" fill="#f3f2f1"/>
<rect y="850" width="1600" height="2" fill="#d6d9dc"/>
<text x="10" y="841" fill="#6a6a6a" font-size="14" textLength="35" lengthAdjust="spacingAndGlyphs">Ready</text>
<g fill="none" stroke="#555" stroke-width="1.100"><rect x="67.500" y="829" width="17" height="15"/><path d="M67.500 832H84.500M70 836H74M70 839H74"/><circle cx="80" cy="840" r="4.500" fill="#f3f2f1"/><circle cx="80" cy="840" r="1.500" fill="#555"/></g>
<rect x="1237" y="822" width="49" height="28" fill="#cfcecd"/>
<g fill="none" stroke="#444" stroke-width="1.200">
<path d="M1253 829H1268V844H1253ZM1258 829V844M1263 829V844M1253 834H1268M1253 839H1268"/>
<rect x="1304" y="828" width="16" height="17"/><rect x="1307" y="831" width="10" height="11"/><path d="M1309 834H1315M1309 837H1315M1309 840H1315" stroke-width=".8"/>
<path d="M1354 828H1370V844H1354ZM1360 828V838H1370"/>
</g>
<path d="M1393 837H1402M1540 837H1550M1545 832V842" stroke="#555" stroke-width="1.100"/>
<path d="M1410 837H1533" stroke="#333" stroke-width="1.200"/>
<rect x="1463" y="829" width="6.500" height="16" fill="#707070"/>
<path d="M1471.500 833V841" stroke="#333"/>
<text x="1564" y="841" fill="#666" font-size="14" textLength="27" lengthAdjust="spacingAndGlyphs">90%</text>
</svg>
</body></html>
